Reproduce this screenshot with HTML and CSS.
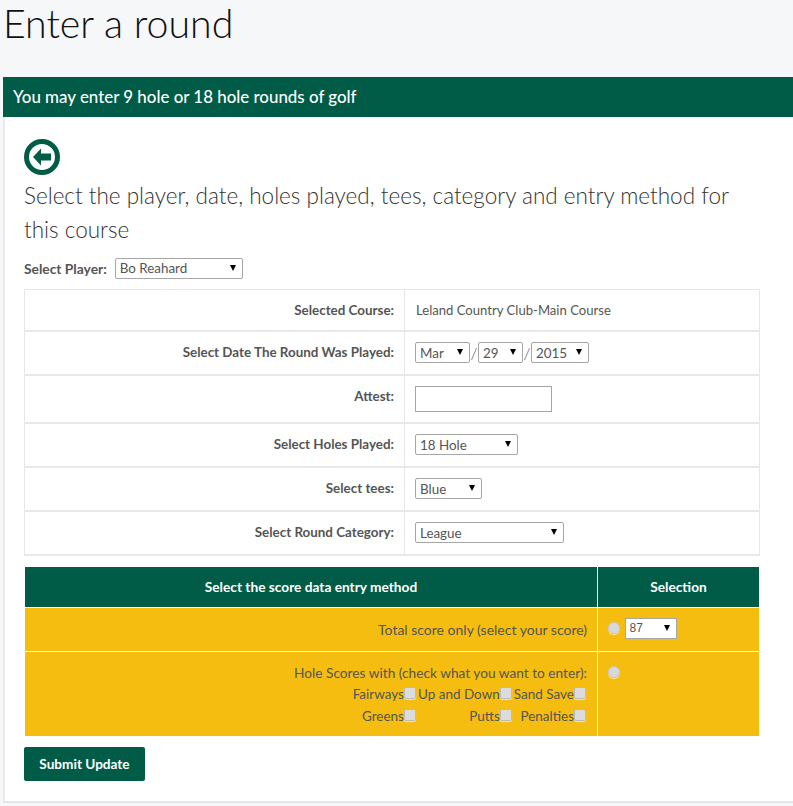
FILE: index.html
```html
<!DOCTYPE html>
<html lang="en">
<head>
  <meta charset="UTF-8" />
  <meta name="viewport" content="width=device-width, initial-scale=1.0"/>
  <title>Enter a round</title>
  <link rel="stylesheet" href="styles.css">
</head>
<body>
  <h1>Enter a round</h1>

  <div class="panel">
    <div class="panel-head">You may enter 9 hole or 18 hole rounds of golf</div>
    <div class="panel-body">
      <a class="back" href="#">
        <svg width="36" height="36" viewBox="0 0 36 36">
          <circle cx="18" cy="18" r="15.5" fill="#fff" stroke="#005c46" stroke-width="5"/>
          <path d="M9 18 L17 9.5 V14.5 H27 V21.5 H17 V26.5 Z" fill="#005c46"/>
        </svg>
      </a>
      <h3>Select the player, date, holes played, tees, category and entry method for this course</h3>

      <div class="player-row">
        <label>Select Player:</label>
        <span class="pick w-player"><select><option>Bo Reahard</option></select></span>
      </div>

      <table class="info">
        <tr class="r-course">
          <th>Selected Course:</th>
          <td>Leland Country Club-Main Course</td>
        </tr>
        <tr class="r-date">
          <th>Select Date The Round Was Played:</th>
          <td>
            <span class="pick w-month"><select><option>Mar</option></select></span><span class="slash">/</span><span class="pick w-day"><select><option>29</option></select></span><span class="slash">/</span><span class="pick w-year"><select><option>2015</option></select></span>
          </td>
        </tr>
        <tr class="r-attest">
          <th>Attest:</th>
          <td><input type="text" class="attest"></td>
        </tr>
        <tr>
          <th>Select Holes Played:</th>
          <td><span class="pick w-holes"><select><option>18 Hole</option></select></span></td>
        </tr>
        <tr>
          <th>Select tees:</th>
          <td><span class="pick w-tees"><select><option>Blue</option></select></span></td>
        </tr>
        <tr>
          <th>Select Round Category:</th>
          <td><span class="pick w-cat"><select><option>League</option></select></span></td>
        </tr>
      </table>

      <table class="method">
        <tr>
          <th class="col-a">Select the score data entry method</th>
          <th class="col-b">Selection</th>
        </tr>
        <tr class="r-total">
          <td class="lbl">Total score only (select your score)</td>
          <td class="sel">
            <span class="radio"></span>
            <span class="pick w-score"><select><option>87</option></select></span>
          </td>
        </tr>
        <tr class="r-holes">
          <td class="lbl">
            <div class="line-a">Hole Scores with (check what you want to enter):</div>
            <div class="checks">
              <span>Fairways<i class="check"></i></span>
              <span>Up and Down<i class="check"></i></span>
              <span>Sand Save<i class="check"></i></span>
              <span>Greens<i class="check"></i></span>
              <span>Putts<i class="check"></i></span>
              <span>Penalties<i class="check"></i></span>
            </div>
          </td>
          <td class="sel"><span class="radio"></span></td>
        </tr>
      </table>

      <button type="button" class="submit">Submit Update</button>
    </div>
  </div>
</body>
</html>
```

FILE: styles.css
```css
* { box-sizing: border-box; }
body {
  font-family: Lato, "Open Sans", sans-serif;
  font-size: 13px;
  color: #555;
  background: #f6f7f9;
  margin: 0; padding: 0;
  overflow: hidden;
}
h1 {
  font-size: 39.3px; font-weight: 300; color: #111;
  margin: 0; padding: 0 0 0 3px;
  height: 77px; line-height: 45px;
}

.panel {
  margin-left: 3px; width: 800px;
  border-bottom: 2px solid #e4e6ea;
  background: #fff;
}
.panel-head {
  background: #005c46; color: #fff;
  height: 40px; line-height: 40px;
  padding-left: 10px;
  font-size: 16.9px; font-weight: 500;
}
.panel-body {
  border-left: 2px solid #e9eaee;
  padding: 22px 0 20px 19px;
  height: 684px;
}
.back { display: block; height: 37px; }
.back svg { display: block; }
h3 {
  font-size: 22.5px; font-weight: 300; color: #333;
  line-height: 34px; margin: 3px 0 0; width: 736px;
}

.player-row {
  display: flex; align-items: center; gap: 8px;
  margin: 11px 0 11px;
  height: 20px;
}
.player-row label { font-weight: 700; font-size: 13.8px; }

.pick { position: relative; display: inline-block; vertical-align: middle; }
.pick select {
  appearance: none; -webkit-appearance: none;
  display: block; width: 100%; height: 21px;
  font-family: inherit; font-size: 13.4px; color: #555;
  background: #fff;
  border: 1px solid #a6a6a6; border-radius: 2px;
  padding: 0 0 0 4px; margin: 0;
}
.pick::after {
  content: ""; position: absolute; right: 7px; top: 7px;
  border-left: 3px solid transparent; border-right: 3px solid transparent;
  border-top: 6px solid #000;
  pointer-events: none;
}
.w-player { width: 128px; }
.w-month { width: 55px; }
.w-day { width: 45px; }
.w-year { width: 58px; }
.w-holes { width: 103px; }
.w-tees { width: 67px; }
.w-cat { width: 149px; }
.w-score { width: 52px; }
.w-score select { border-radius: 0; font-family: "Liberation Sans", sans-serif; font-size: 12px; }
.slash { display: inline-block; width: 8px; text-align: center; font-size: 16px; font-weight: 300; vertical-align: middle; }

table { border-collapse: collapse; width: 736px; }
.info th, .info td { border: 1px solid #e8e8e8; height: 44px; padding: 0 10px; }
.info tr { border-bottom: 2px solid #e8e8e8; }
.info th { width: 380px; text-align: right; font-weight: 700; font-size: 13.4px; padding-bottom: 2px; }
.info td { font-size: 13.1px; }
.info .r-course th, .info .r-course td { height: 41px; padding-bottom: 0; }
.info .r-course td { padding-left: 11px; }
.info .r-attest th, .info .r-attest td { height: 48px; }
.info .r-attest th { vertical-align: top; padding-top: 12px; }
.attest {
  display: block; width: 137px; height: 26px;
  border: 1px solid #a6a6a6; background: #fff; padding: 0;
}

.method { margin-top: 10px; }
.method th, .method td { border: 1px solid #fff; padding: 0 10px; }
.method th {
  background: #005c46; color: #fff; height: 41px;
  font-size: 13.7px; font-weight: 700; text-align: center;
}
.col-a { width: 573px; }
.method td { background: #f4bd10; color: #555; font-size: 14px; }
.method .lbl { text-align: right; }
.r-total td { height: 44px; }
.r-holes td { height: 85px; vertical-align: top; padding-top: 11px; }
.method .sel { white-space: nowrap; }
.r-total .sel { padding-bottom: 2px; }
.line-a { line-height: 20px; font-size: 13.7px; }
.checks {
  display: grid; justify-content: end;
  grid-template-columns: auto auto auto;
  column-gap: 2px;
  line-height: 22px;
  font-size: 13.5px;
  padding-right: 1px;
}
.checks span { display: flex; justify-content: flex-end; align-items: center; }
.check {
  display: inline-block; width: 12px; height: 12px;
  background: #dcdcdc; border: 1px solid #bbb; border-radius: 2px;
  box-shadow: 0 1px 1px rgba(255,255,255,.6);
  margin-top: -2px;
}
.radio {
  display: inline-block; width: 12px; height: 12px; border-radius: 50%;
  background: #d9d9dd; border: 1px solid #c4c4c4;
  box-shadow: 0 1px 1px rgba(255,255,255,.6);
  vertical-align: middle; margin-right: 1px;
}
.r-holes .radio { vertical-align: top; margin-top: 3px; }

.submit {
  display: block; margin-top: 10px;
  background: #005c46; color: #fff;
  border: none; border-radius: 2px;
  width: 121px; height: 34px;
  font-family: inherit; font-size: 13.6px; font-weight: 700;
}
```
